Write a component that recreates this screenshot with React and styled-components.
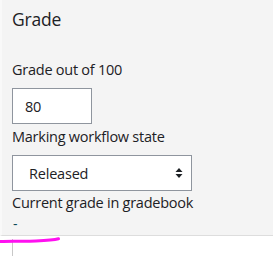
import React from "react";
import styled, { createGlobalStyle } from "styled-components";

const Global = createGlobalStyle`
  html, body { margin: 0; padding: 0; background: #ffffff; }
  body { font-family: "Open Sans", "Noto Sans", sans-serif; color: #1d2125; }
`;

const Page = styled.div`
  position: relative;
  width: 273px;
  height: 256px;
  overflow: hidden;
  background: #ffffff;
`;

const Panel = styled.section`
  background: #f4f4f4;
  border-left: 2px solid #f9f9f9;
  border-bottom: 1px solid #dddddd;
  padding: 0 0 0 10px;
  height: 236px;
  box-sizing: border-box;
  display: flex;
  flex-direction: column;
`;

const Heading = styled.h3`
  margin: 0;
  padding-top: 6px;
  font-size: 17.5px;
  font-weight: 400;
  line-height: 26px;
  letter-spacing: -0.2px;
  color: #1d2125;
`;

const Label = styled.div`
  font-size: 14.5px;
  line-height: 22px;
  letter-spacing: -0.25px;
  color: #1d2125;
  margin-top: ${(p) => p.$top}px;
`;

const Box = styled.div`
  box-sizing: border-box;
  width: ${(p) => p.$w}px;
  height: 36px;
  margin-top: ${(p) => p.$top}px;
  border: 1px solid #8f959e;
  background: #ffffff;
  display: flex;
  align-items: center;
  justify-content: space-between;
  padding: 0 ${(p) => p.$pr}px 0 ${(p) => p.$pl}px;
  font-size: 14.5px;
  letter-spacing: -0.2px;
  color: #1d2125;
`;

const Dash = styled.div`
  margin-top: 1px;
  margin-left: 1px;
  font-size: 14px;
  line-height: 18px;
  color: #0b4a57;
`;

const Below = styled.div`
  margin: 3px 0 0 12px;
  height: 30px;
  border-left: 1px solid #c8c8c8;
`;

const Scribble = styled.svg`
  position: absolute;
  left: 0;
  top: 234px;
`;

const Arrows = () => (
  <svg width="8" height="12" viewBox="0 0 8 12">
    <path d="M4 1 L7.5 5 H0.5 Z" fill="#1d2125" />
    <path d="M4 11 L7.5 7 H0.5 Z" fill="#1d2125" />
  </svg>
);

export default function App() {
  return (
    <Page>
      <Global />
      <Panel>
        <Heading>Grade</Heading>
        <Label $top={27}>Grade out of 100</Label>
        <Box $w={80} $top={7} $pl={12} $pr={8}>80</Box>
        <Label $top={2}>Marking workflow state</Label>
        <Box $w={180} $top={7} $pl={16} $pr={8}>
          <span>Released</span>
          <Arrows />
        </Box>
        <Label $top={1}>Current grade in gradebook</Label>
        <Dash>-</Dash>
      </Panel>
      <Below />
      <Scribble width="70" height="14" viewBox="0 0 70 14">
        <path
          d="M0.5 7.5 C 12 6.8, 22 7.6, 36 7 S 54 6, 58.5 4.8"
          stroke="#ff10f0"
          strokeWidth="3"
          fill="none"
          strokeLinecap="round"
        />
      </Scribble>
    </Page>
  );
}
